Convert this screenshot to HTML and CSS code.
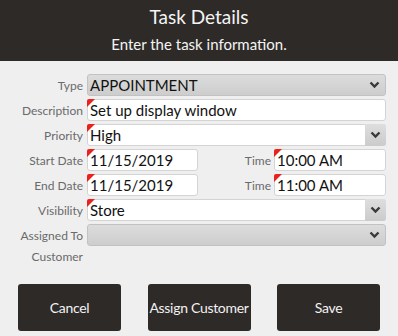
FILE: index.html
```html
<!DOCTYPE html>
<html lang="en">

<head>
    <meta charset="UTF-8">
    <title>Task Details</title>
    <link rel="stylesheet" href="styles.css">
</head>

<body>
    <header class="head">
        <h1 class="title">Task Details</h1>
        <p class="sub">Enter the task information.</p>
    </header>
    <section class="form">
        <div class="row">
            <label class="lbl">Type</label>
            <div class="field select disabled">
                <span class="val">APPOINTMENT</span>
                <span class="arrow"><svg width="11" height="8" viewBox="0 0 11 8"><polyline points="1.5,1.5 5.5,5.5 9.5,1.5" fill="none" stroke="#3a3a3a" stroke-width="2.4"/></svg></span>
            </div>
        </div>
        <div class="row">
            <label class="lbl">Description</label>
            <div class="field req"><span class="val">Set up display window</span></div>
        </div>
        <div class="row">
            <label class="lbl">Priority</label>
            <div class="field select req">
                <span class="val">High</span>
                <span class="arrow btn"><svg width="11" height="8" viewBox="0 0 11 8"><polyline points="1.5,1.5 5.5,5.5 9.5,1.5" fill="none" stroke="#3a3a3a" stroke-width="2.4"/></svg></span>
            </div>
        </div>
        <div class="row">
            <label class="lbl">Start Date</label>
            <div class="field req date"><span class="val">11/15/2019</span></div>
            <label class="lbl time-lbl">Time</label>
            <div class="field req time"><span class="val">10:00 AM</span></div>
        </div>
        <div class="row">
            <label class="lbl">End Date</label>
            <div class="field req date"><span class="val">11/15/2019</span></div>
            <label class="lbl time-lbl">Time</label>
            <div class="field req time"><span class="val">11:00 AM</span></div>
        </div>
        <div class="row">
            <label class="lbl">Visibility</label>
            <div class="field select req">
                <span class="val">Store</span>
                <span class="arrow btn"><svg width="11" height="8" viewBox="0 0 11 8"><polyline points="1.5,1.5 5.5,5.5 9.5,1.5" fill="none" stroke="#3a3a3a" stroke-width="2.4"/></svg></span>
            </div>
        </div>
        <div class="row tight">
            <label class="lbl">Assigned To</label>
            <div class="field select disabled">
                <span class="val"></span>
                <span class="arrow"><svg width="11" height="8" viewBox="0 0 11 8"><polyline points="1.5,1.5 5.5,5.5 9.5,1.5" fill="none" stroke="#3a3a3a" stroke-width="2.4"/></svg></span>
            </div>
        </div>
        <div class="row short">
            <label class="lbl">Customer</label>
        </div>
    </section>
    <footer class="actions">
        <a class="action" href="javascript:;">Cancel</a>
        <a class="action" href="javascript:;">Assign Customer</a>
        <a class="action" href="javascript:;">Save</a>
    </footer>
</body>

</html>
```

FILE: styles.css
```css
body {
    margin: 0;
    background: #efefef;
    font-family: Lato, "Noto Sans", Arial, sans-serif;
}

a {
    text-decoration: none;
}

.head {
    height: 61px;
    background: #2e2a28;
    color: #f4f4f4;
    text-align: center;
    padding-top: 6px;
    box-sizing: border-box;
}

.title {
    margin: 0;
    font-size: 19px;
    font-weight: normal;
    line-height: 22px;
}

.sub {
    margin: 6px 0 0;
    font-size: 15px;
    line-height: 20px;
}

.form {
    padding: 13px 12px 0 0;
}

.row {
    display: flex;
    align-items: center;
    height: 22px;
    margin-bottom: 3px;
}

.row.tight {
    margin-bottom: 0;
}

.row.short {
    height: 20px;
}

.lbl {
    width: 83px;
    flex: none;
    text-align: right;
    padding-right: 4px;
    font-size: 12px;
    color: #6a6a6a;
}

.field {
    position: relative;
    flex: 1;
    display: flex;
    align-items: center;
    height: 22px;
    box-sizing: border-box;
    border: 1px solid #d4d4d4;
    border-radius: 3px;
    background: #fff;
    font-size: 15px;
    color: #111;
}

.val {
    flex: 1;
    padding-left: 2px;
    white-space: nowrap;
}

.req::before {
    content: "";
    position: absolute;
    top: -1px;
    left: -1px;
    border-top: 8px solid #e8231e;
    border-right: 8px solid transparent;
    border-top-left-radius: 2px;
}

.disabled {
    background: linear-gradient(#dcdcdc, #cdcdcd);
    border-color: #c2c2c2;
}

.arrow {
    width: 21px;
    height: 100%;
    display: flex;
    align-items: center;
    justify-content: center;
}

.arrow.btn {
    height: 22px;
    margin: -1px -1px -1px 0;
    border-radius: 0 3px 3px 0;
    background: linear-gradient(#dedede, #cbcbcb);
}

.date {
    flex: none;
    width: 111px;
}

.time-lbl {
    width: auto;
    flex: 1;
    padding-right: 3px;
}

.time {
    flex: none;
    width: 112px;
}

.actions {
    display: flex;
    justify-content: space-between;
    padding: 15px 18px 0;
}

.action {
    width: 103px;
    height: 47px;
    display: flex;
    align-items: center;
    justify-content: center;
    background: #2e2a28;
    border-radius: 3px;
    color: #f2f2f2;
    font-size: 14px;
    letter-spacing: -0.3px;
    white-space: nowrap;
}
```
